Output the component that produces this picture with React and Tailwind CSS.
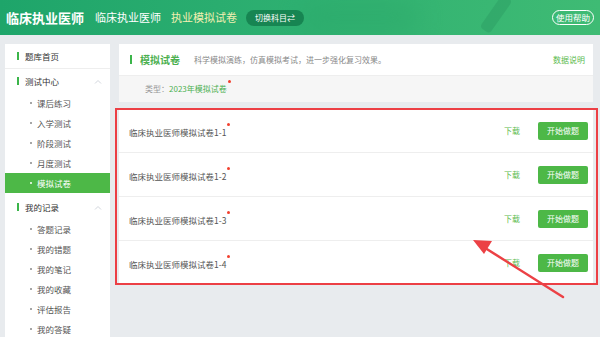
import React from 'react';

const testItems = ['课后练习', '入学测试', '阶段测试', '月度测试', '模拟试卷'];
const recordItems = ['答题记录', '我的错题', '我的笔记', '我的收藏', '评估报告', '我的答疑'];
const papers = ['临床执业医师模拟试卷1-1', '临床执业医师模拟试卷1-2', '临床执业医师模拟试卷1-3', '临床执业医师模拟试卷1-4'];

function Chevron() {
  return (
    <svg width="8" height="5" viewBox="0 0 8 5" className="text-gray-300">
      <path d="M1 4.5 L4 1.5 L7 4.5" fill="none" stroke="currentColor" strokeWidth="1" />
    </svg>
  );
}

function GroupTitle({ title, open }) {
  return (
    <div className="flex items-center h-[24px] pl-[12px] pr-[8px]">
      <span className="w-[2px] h-[8px] bg-[#3bb54a] mr-[6px]" />
      <span className="text-[8.5px] text-[#333] flex-1">{title}</span>
      {open && <Chevron />}
    </div>
  );
}

function SubItem({ label, active }) {
  return (
    <div className={`flex items-center h-[20px] pl-[25px] text-[8.5px] ${active ? 'bg-[#4db847] text-white' : 'text-[#555]'}`}>
      <span className={`w-[2px] h-[2px] rounded-full mr-[5px] ${active ? 'bg-white' : 'bg-[#888]'}`} />
      {label}
    </div>
  );
}

function Sidebar() {
  return (
    <div className="w-[105px] bg-white shrink-0">
      <div className="border-b border-[#eee] h-[25px] flex items-center pl-[12px]">
        <span className="w-[2px] h-[8px] bg-[#3bb54a] mr-[6px]" />
        <span className="text-[8.5px] text-[#333]">题库首页</span>
      </div>
      <GroupTitle title="测试中心" open />
      {testItems.map((t) => (
        <SubItem key={t} label={t} active={t === '模拟试卷'} />
      ))}
      <div className="h-[2px]" />
      <GroupTitle title="我的记录" open />
      {recordItems.map((t) => (
        <SubItem key={t} label={t} />
      ))}
    </div>
  );
}

function Dot() {
  return <span className="absolute -top-[3px] -right-[4px] w-[3px] h-[3px] rounded-full bg-[#f2402e]" />;
}

export default function App() {
  return (
    <div className="relative w-[600px] h-[337px] overflow-hidden bg-[#e8ebee]" style={{ fontFamily: '"Noto Sans CJK SC", "Noto Sans", sans-serif' }}>
      {/* header */}
      <div className="relative h-[35px] flex items-center px-[6px] bg-gradient-to-r from-[#1ea56a] via-[#2eb071] to-[#3fbb74] overflow-hidden">
        <div className="absolute left-[300px] top-0 w-[120px] h-[35px] rounded-full bg-[#2aa768] opacity-40 blur-md" />
        <div className="absolute left-[490px] -top-[6px] w-[12px] h-[40px] rotate-[35deg] bg-[#2ea266] opacity-60 rounded-sm" />
        <span className="relative text-white font-bold text-[13px]">临床执业医师</span>
        <span className="relative text-white text-[11px] ml-[11px]">临床执业医师</span>
        <span className="relative text-[#f3f0b2] text-[11px] ml-[10px]">执业模拟试卷</span>
        <span className="relative ml-[9px] h-[16px] px-[9px] rounded-full bg-[#178552] text-white text-[8px] flex items-center">切换科目⇄</span>
        <span className="relative ml-auto h-[15px] px-[3px] rounded-full border border-white text-white text-[8.5px] flex items-center">使用帮助</span>
      </div>

      <div className="flex pl-[5px] pt-[9px] h-[302px]">
        <Sidebar />
        <div className="ml-[9px] w-[474px]">
          <div className="bg-white">
            <div className="h-[32px] flex items-center pl-[11px] pr-[8px] border-b border-[#eee]">
              <span className="w-[2px] h-[9px] bg-[#3bb54a] mr-[8px]" />
              <span className="text-[10px] font-bold text-[#4cb050]">模拟试卷</span>
              <span className="text-[8px] text-[#888] ml-[14px]">科学模拟演练，仿真模拟考试，进一步强化复习效果。</span>
              <span className="ml-auto text-[8px] text-[#5dbb4e]">数据说明</span>
            </div>
            <div className="h-[26px] flex items-center pl-[26px] bg-[#f6f6f6] text-[8px]">
              <span className="text-[#999]">类型：</span>
              <span className="relative text-[#4cb050]">2023年模拟试卷<Dot /></span>
            </div>
          </div>

          <div className="mt-[7px]">
            {papers.map((p, i) => (
              <div key={p} className={`h-[44px] bg-white flex items-center pl-[10px] pr-[5px] ${i < papers.length - 1 ? 'border-b border-[#eee]' : ''}`}>
                <span className="relative text-[8.5px] text-[#555] mt-[3px]">{p}<Dot /></span>
                <span className="ml-auto text-[8px] text-[#5dbb4e] mr-[18px]">下载</span>
                <span className="w-[50px] h-[18px] rounded-[2px] bg-[#4db847] text-white text-[8px] flex items-center justify-center">开始做题</span>
              </div>
            ))}
          </div>
        </div>
      </div>

      {/* annotation overlay */}
      <div className="absolute left-[115px] top-[108px] w-[483px] h-[177px] border-2 border-[#ec3f45] pointer-events-none" />
      <svg className="absolute left-0 top-0 pointer-events-none" width="600" height="337">
        <line x1="563" y1="297" x2="482" y2="246" stroke="#ec4145" strokeWidth="2.5" strokeLinecap="round" />
        <polygon points="473,240 492,241 484,254" fill="#ec4145" />
      </svg>
    </div>
  );
}
